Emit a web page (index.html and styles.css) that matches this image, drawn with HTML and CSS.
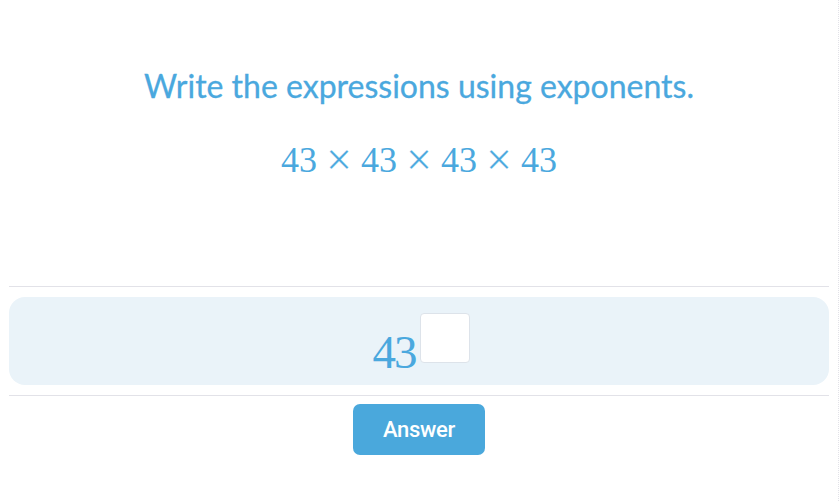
FILE: index.html
```html
<!DOCTYPE html>
<html lang="en">
<head>
    <meta charset="UTF-8">
    <meta name="viewport" content="width=device-width, initial-scale=1.0">
    <title>Exponents</title>
    <link rel="stylesheet" href="styles.css">
</head>
<body>
    <div class="page">
        <div class="question">
            <h1 class="title">Write the expressions using exponents.</h1>
            <div class="math expr">43<span class="op">&times;</span>43<span class="op">&times;</span>43<span class="op">&times;</span>43</div>
        </div>

        <div class="answer-area">
            <div class="answer-panel">
                <span class="math base">43</span>
                <input type="text" class="power-box" aria-label="exponent">
            </div>
        </div>

        <div class="actions">
            <button class="answer-btn">Answer</button>
        </div>
    </div>
</body>
</html>
```

FILE: styles.css
```css
body {
    margin: 0;
    padding: 0;
    background: #fff;
    font-family: 'Lato', sans-serif;
    color: #4aa8de;
}

.page {
    width: 820px;
    padding: 0 9px;
    border-right: 1px dotted #e2e2e8;
    min-height: 501px;
    box-sizing: content-box;
}

.question {
    height: 286px;
    text-align: center;
    overflow: hidden;
}

.title {
    margin: 0;
    padding-top: 66px;
    font-size: 32px;
    font-weight: 400;
    line-height: 40px;
    color: #4aa8de;
    -webkit-text-stroke: 0.3px #4aa8de;
}

.math {
    font-family: 'Liberation Serif', 'Times New Roman', serif;
}

.expr {
    margin-top: 33px;
    font-size: 36px;
    line-height: 42px;
}

.op {
    display: inline-block;
    font-size: 46px;
    line-height: 42px;
    margin: 0 9px;
    vertical-align: top;
    -webkit-text-stroke: 0.2px #fff;
}

.answer-area {
    border-top: 1px solid #e2e2e8;
    border-bottom: 1px solid #e2e2e8;
    padding: 10px 0;
}

.answer-panel {
    height: 88px;
    background: #eaf3f9;
    border-radius: 16px;
    display: flex;
    justify-content: center;
    align-items: flex-start;
}

.base {
    font-size: 47px;
    letter-spacing: -2px;
    margin-top: 33px;
    margin-left: 4px;
    line-height: 44px;
}

.power-box {
    width: 50px;
    height: 50px;
    box-sizing: border-box;
    margin-top: 16px;
    margin-left: 4px;
    border: 1px solid #dde3ea;
    border-radius: 4px;
    background: #fff;
    padding: 0;
}

.actions {
    display: flex;
    justify-content: center;
    padding-top: 8px;
}

.answer-btn {
    width: 132px;
    height: 51px;
    border: none;
    border-radius: 7px;
    background: #4aa8dc;
    color: #fff;
    font-family: 'Roboto', sans-serif;
    font-size: 22px;
    font-weight: 500;
    letter-spacing: -0.3px;
    cursor: pointer;
}
```
